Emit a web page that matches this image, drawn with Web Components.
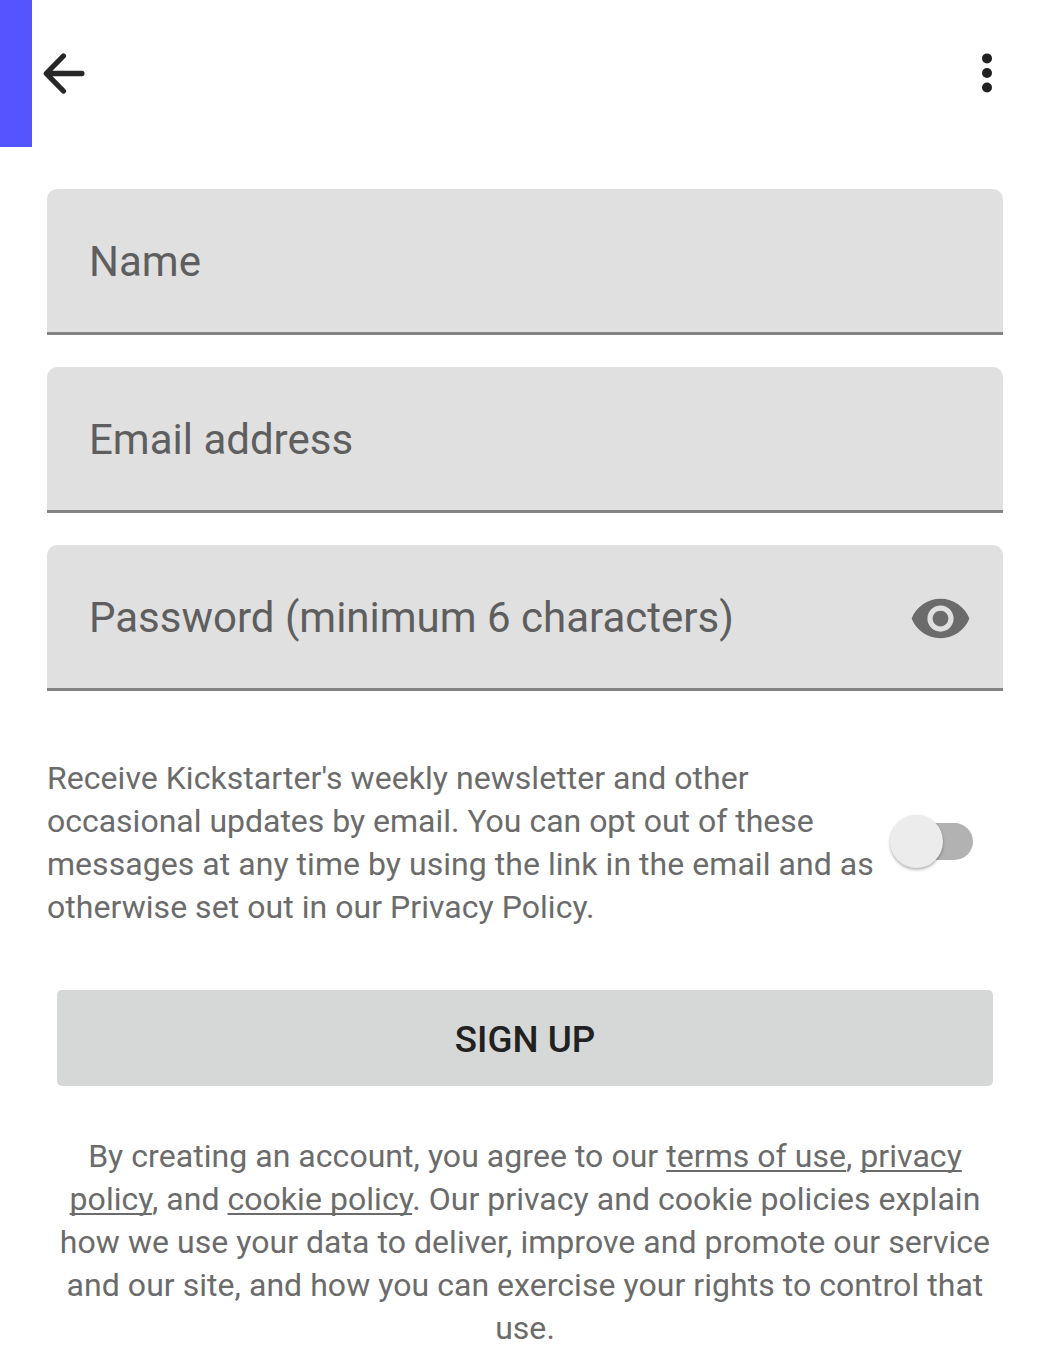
<!DOCTYPE html>
<html lang="en"><head><meta charset="utf-8"><title>Sign up</title>
<style>body{margin:0;background:#fff;font-family:Roboto,sans-serif}</style></head><body>
<signup-page></signup-page>
<script>
const define=(name,html)=>customElements.define(name,class extends HTMLElement{constructor(){super();this.attachShadow({mode:'open'}).innerHTML=html;}});
define('app-toolbar',`<style>
:host{display:flex;height:147px;justify-content:space-between}
.left{display:flex;align-items:center}
.accent{width:32px;height:147px;background:#5555ff}
svg{display:block}.more{align-self:center;margin-right:32px}
</style><div class="left"><div class="accent"></div>
<svg class="back" width="63" height="63" viewBox="0 0 63 63" fill="none" stroke="#272727" stroke-width="5.3" stroke-linecap="round" stroke-linejoin="round"><path d="M49.9 31.5H15M31.4 14L14.2 31.5L31.4 49"/></svg></div>
<svg class="more" width="63" height="63" viewBox="0 0 63 63" fill="#212121"><circle cx="32" cy="16.4" r="5"/><circle cx="32" cy="31" r="5"/><circle cx="32" cy="45.5" r="5"/></svg>`);
define('form-field',`<style>
:host{display:flex;box-sizing:border-box;height:146px;background:#e0e0e0;border-radius:10px 10px 0 0;border-bottom:3px solid #838383;padding:2px 31px 0 42px;align-items:center;justify-content:space-between;color:#5e5e5e;font-size:42px;white-space:nowrap}
</style><slot></slot><slot name="icon"></slot>`);
define('eye-icon',`<style>:host{display:block;padding-top:2px}svg{display:block}</style>
<svg width="63" height="63" viewBox="0 0 24 24" fill="#6b6b6b"><path d="M12 4.5C7 4.5 2.73 7.61 1 12c1.73 4.39 6 7.5 11 7.5s9.27-3.11 11-7.5c-1.73-4.39-6-7.5-11-7.5zM12 17c-2.76 0-5-2.24-5-5s2.24-5 5-5 5 2.24 5 5-2.24 5-5 5zm0-8c-1.66 0-3 1.34-3 3s1.34 3 3 3 3-1.34 3-3-1.34-3-3-3z"/></svg>`);
define('toggle-switch',`<style>:host{display:flex;align-items:center;box-sizing:border-box;width:83px;height:53px}
.track{width:72px;height:37px;border-radius:19px;background:#b2b2b2;margin-left:11px;display:flex;align-items:center}
.thumb{width:53px;height:53px;flex:none;border-radius:50%;background:#ececec;margin-left:-11px;box-shadow:0 2px 3px #0004,0 0 2px #0001}
</style><div class="track"><div class="thumb"></div></div>`);
define('sign-button',`<style>:host{display:flex;height:96px;background:#d6d7d7;border-radius:5px;align-items:center;justify-content:center;color:#212121;font-size:36.75px;font-weight:500;box-sizing:border-box;padding-top:2px}</style><slot></slot>`);
define('signup-page',`<style>
:host{display:block;width:1050px;height:1364px;overflow:hidden}
main{display:flex;flex-direction:column;padding:42px 47px 0}
.fields{display:flex;flex-direction:column;gap:32px}
.news{display:flex;margin-top:66px;justify-content:space-between;align-items:center;padding-right:30px}
p{margin:0;font-size:32px;line-height:43px;letter-spacing:.045px;color:#6b6b6b;white-space:nowrap}
.tight{letter-spacing:-.01px}
toggle-switch{margin-bottom:4px}
sign-button{margin:61px 10px 0}.legal{text-align:center;margin-top:49px}
u{text-decoration-thickness:1.5px;text-underline-offset:3px;text-decoration-skip-ink:none}
</style><app-toolbar></app-toolbar><main><div class="fields"><form-field>Name</form-field><form-field>Email address</form-field><form-field>Password (minimum 6 characters)<eye-icon slot="icon"></eye-icon></form-field></div>
<div class="news"><p>Receive Kickstarter's weekly newsletter and other<br><span class="tight">occasional updates by email. You can opt out of these</span><br>messages at any time by using the link in the email and as<br>otherwise set out in our Privacy Policy.</p><toggle-switch></toggle-switch></div>
<sign-button>SIGN UP</sign-button>
<p class="legal">By creating an account, you agree to our <u>terms of use</u>, <u>privacy</u><br><u>policy</u>, and <u>cookie policy</u>. Our privacy and cookie policies explain<br>how we use your data to deliver, improve and promote our service<br>and our site, and how you can exercise your rights to control that<br>use.</p></main>`);
</script></body></html>
